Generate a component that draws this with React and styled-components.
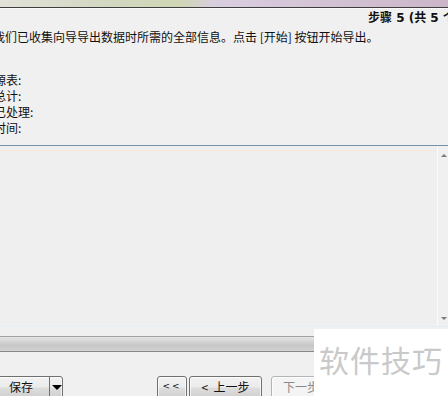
import React from 'react'
import styled, { createGlobalStyle } from 'styled-components'

const GlobalStyle = createGlobalStyle`
  html, body {
    margin: 0;
    padding: 0;
    background: #f0f0f0;
    overflow: hidden;
  }
  body {
    font-family: "Noto Sans CJK SC", "Liberation Sans", sans-serif;
    font-size: 12px;
    color: #111;
  }
`

const Window = styled.div`
  position: relative;
  width: 448px;
  height: 396px;
  overflow: hidden;
  display: flex;
  flex-direction: column;
  background: #f0f0f0;
`

const TitleStrip = styled.div`
  height: 7px;
  flex: none;
  background: linear-gradient(90deg, #e2e2da 0%, #d3d8c2 22%, #cfd6b4 40%, #d9cee0 48%, #d4c4d6 70%, #cbb6c9 100%);
  border-bottom: 1px solid #3e3e3e;
  box-shadow: 0 1px 0 #fafafa;
`

const Header = styled.div`
  flex: none;
  padding: 2px 0 0 368px;
  line-height: 16px;
  white-space: nowrap;
  font-weight: 700;
  font-family: "DejaVu Sans", "Noto Sans CJK SC", sans-serif;
`

const Intro = styled.div`
  flex: none;
  margin: 3px 0 0 -7px;
  line-height: 16px;
  white-space: nowrap;
`

const InfoList = styled.div`
  flex: none;
  margin: 27px 0 0 -6px;
  display: flex;
  flex-direction: column;
`

const InfoRow = styled.div`
  line-height: 16px;
  white-space: nowrap;
`

const Divider = styled.div`
  flex: none;
  margin-top: 9px;
  height: 1px;
  background: #7492ab;
`

const LogBox = styled.div`
  flex: none;
  height: 180px;
  display: flex;
  border-bottom: 1px solid #e6eef4;
`

const LogContent = styled.div`
  flex: 1;
  background: #efefef;
  border-top: 4px solid #eeeeee;
  box-sizing: border-box;
`

const LogFirstRow = styled.div`
  height: 2px;
  background: #f3ebe6;
`

const ScrollBar = styled.div`
  width: 11px;
  flex: none;
  border-left: 1px solid #fbfbfb;
  background: #f0f0f0;
  display: flex;
  flex-direction: column;
  justify-content: space-between;
  align-items: flex-end;
  padding: 8px 0 6px;
  box-sizing: border-box;
`

const Arrow = styled.span`
  width: 0;
  height: 0;
  border-left: 3px solid transparent;
  border-right: 3px solid transparent;
  ${p => p.$down ? 'border-top: 3px solid #7a7a7a;' : 'border-bottom: 3px solid #7a7a7a;'}
  margin-right: 1px;
`

const ProgressArea = styled.div`
  flex: none;
  padding-top: 9px;
  height: 49px;
  box-sizing: border-box;
`

const ProgressTrack = styled.div`
  height: 16px;
  box-sizing: border-box;
  border-top: 1px solid #a2a2a2;
  border-bottom: 1px solid #8a8a8a;
  background: linear-gradient(180deg, #e4e4e4 0%, #d6d6d6 30%, #c6c6c6 60%, #d2d2d2 100%);
`

const Footer = styled.div`
  flex: none;
  display: flex;
  align-items: flex-start;
`

const Button = styled.button`
  flex: none;
  height: 23px;
  box-sizing: border-box;
  border: 1px solid ${p => p.disabled ? '#b0b5b8' : '#707070'};
  border-radius: 3px;
  background: ${p => p.disabled
    ? '#f4f4f4'
    : 'linear-gradient(180deg, #f2f2f2 0%, #ebebeb 48%, #dddddd 52%, #cfcfcf 100%)'};
  color: ${p => p.disabled ? '#8a8a8a' : '#111'};
  font-family: "Noto Sans CJK SC", "Liberation Sans", sans-serif;
  font-size: 12px;
  line-height: 19px;
  padding: 0;
  display: flex;
  align-items: flex-start;
  justify-content: center;
  white-space: pre;
  width: ${p => p.$w}px;
  margin-left: ${p => p.$gap || 0}px;
  box-shadow: inset 0 0 0 1px rgba(255, 255, 255, 0.7);
`

const SplitButton = styled(Button)`
  margin-left: -20px;
  justify-content: flex-start;
  padding-left: 28px;
`

const SplitLabel = styled.span`
  flex: none;
  width: 40px;
  text-align: left;
  white-space: nowrap;
`

const SplitPart = styled.span`
  flex: none;
  display: flex;
  justify-content: center;
  padding-top: 8px;
  width: 14px;
  height: 100%;
  box-sizing: border-box;
  border-left: 1px solid #707070;
`

const DropArrow = styled.span`
  width: 0;
  height: 0;
  border-left: 5px solid transparent;
  border-right: 5px solid transparent;
  border-top: 5px solid #000;
`

const SmallText = styled.span`
  font-family: "DejaVu Sans", sans-serif;
  font-size: 9px;
  letter-spacing: 2px;
`

const Watermark = styled.div`
  position: absolute;
  left: 314px;
  top: 329px;
  right: 0;
  bottom: 0;
  background: #ffffff;
  color: #c9c9c9;
  font-size: 30px;
  line-height: 30px;
  padding: 15px 0 0 5px;
  box-sizing: border-box;
  white-space: nowrap;
  letter-spacing: 1px;
`

export default function App() {
  return (
    <Window>
      <GlobalStyle />
      <TitleStrip />
      <Header>步骤 5 (共 5 个步骤)</Header>
      <Intro>我们已收集向导导出数据时所需的全部信息。点击 [开始] 按钮开始导出。</Intro>
      <InfoList>
        <InfoRow>源表:</InfoRow>
        <InfoRow>总计:</InfoRow>
        <InfoRow>已处理:</InfoRow>
        <InfoRow>时间:</InfoRow>
      </InfoList>
      <Divider />
      <LogBox>
        <LogContent>
          <LogFirstRow />
        </LogContent>
        <ScrollBar>
          <Arrow />
          <Arrow $down />
        </ScrollBar>
      </LogBox>
      <ProgressArea>
        <ProgressTrack />
      </ProgressArea>
      <Footer>
        <SplitButton $w={83}>
          <SplitLabel>保存</SplitLabel>
          <SplitPart><DropArrow /></SplitPart>
        </SplitButton>
        <Button $w={30} $gap={94}><SmallText>&lt;&lt;</SmallText></Button>
        <Button $w={73} $gap={2}>{'<  上一步'}</Button>
        <Button $w={72} $gap={9} disabled>{'下一步  >'}</Button>
      </Footer>
      <Watermark>软件技巧</Watermark>
    </Window>
  )
}
